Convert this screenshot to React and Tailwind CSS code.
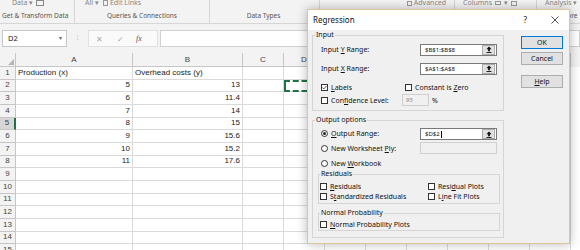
import React from 'react'

const widths = [117, 110, 41, 41, 41, 41, 41, 41, 41, 41]
const letters = ['A', 'B', 'C', 'D', 'E', 'F', 'G', 'H', 'I', 'J']
const data = [
  ['Production (x)', 'Overhead costs (y)'],
  ['5', '13'],
  ['6', '11.4'],
  ['7', '14'],
  ['8', '15'],
  ['9', '15.6'],
  ['10', '15.2'],
  ['11', '17.6'],
]

const ui = "font-['Noto_Sans','Open_Sans',sans-serif]"

function Check({ checked }) {
  return (
    <span className="w-[7px] h-[7px] border border-[#333] bg-white flex items-center justify-center shrink-0">
      {checked && (
        <svg width="6" height="5" viewBox="0 0 6 5">
          <path d="M0.4 2.4 L2.2 4.2 L5.6 0.5" fill="none" stroke="#222" strokeWidth="0.9" />
        </svg>
      )}
    </span>
  )
}

function Radio({ on }) {
  return (
    <span className="w-[7px] h-[7px] rounded-full border border-[#333] bg-white flex items-center justify-center shrink-0">
      {on && <span className="w-[3px] h-[3px] rounded-full bg-[#222]" />}
    </span>
  )
}

function RefBox({ value, disabled }) {
  return (
    <div className="w-[77px] h-[12px] bg-white border border-[#7a7a7a] flex items-center">
      <span className="flex-1 pl-[4px] text-[6px] leading-none text-[#111]">
        {value}
        {value === '$D$2' && <span className="inline-block w-px h-[7px] bg-black align-middle ml-px" />}
      </span>
      {!disabled && (
        <span className="w-[13px] h-[10px] mr-px border border-[#adadad] bg-[#e1e1e1] flex items-center justify-center">
          <svg width="6" height="7" viewBox="0 0 6 7">
            <path d="M3 0.5 L5.6 3.3 L3.9 3.3 L3.9 5.3 L2.1 5.3 L2.1 3.3 L0.4 3.3 Z" fill="#111" />
            <rect x="0.5" y="6" width="5" height="0.9" fill="#111" />
          </svg>
        </span>
      )}
    </div>
  )
}

function Btn({ children, primary }) {
  return (
    <div
      className={
        'w-[42px] h-[13px] flex items-center justify-center text-[7px] leading-none text-[#111] bg-[#e1e1e1] border ' +
        (primary ? 'border-[#0078d7]' : 'border-[#adadad]')
      }
    >
      {children}
    </div>
  )
}

function Sheet() {
  return (
    <div className="font-['Liberation_Sans',Arial,sans-serif] text-[8px] text-[#222]">
      <div className="flex h-[14px] bg-[#f3f3f3]">
        <div className="w-[16px] shrink-0 border-r border-b border-[#c6c6c6] flex items-end justify-end p-[1px]">
          <svg width="6" height="6" viewBox="0 0 6 6">
            <path d="M6 0 L6 6 L0 6 Z" fill="#b5b5b5" />
          </svg>
        </div>
        {widths.map((w, i) => (
          <div
            key={i}
            style={{ width: w }}
            className="shrink-0 border-r border-b border-[#c6c6c6] flex items-center justify-center text-[#444]"
          >
            {letters[i]}
          </div>
        ))}
      </div>
      {Array.from({ length: 15 }).map((_, r) => (
        <div key={r} className="flex h-[12.67px]">
          <div
            className={
              'w-[16px] shrink-0 border-b flex items-center justify-center text-[#444] ' +
              (r === 4
                ? 'bg-[#d6d6d6] border-r-2 border-r-[#217346] border-b-[#c6c6c6]'
                : 'bg-[#f3f3f3] border-r border-[#c6c6c6]')
            }
          >
            {r + 1}
          </div>
          {widths.map((w, c) => {
            const val = data[r] ? data[r][c] : undefined
            const right = r > 0
            return (
              <div
                key={c}
                style={{ width: w }}
                className={
                  'shrink-0 border-r border-b border-[#dadada] flex items-center overflow-visible whitespace-nowrap px-[2px] ' +
                  (right ? 'justify-end' : 'justify-start') +
                  (r === 1 && c === 3 ? ' outline-2 outline-dashed outline-[#217346] -outline-offset-2' : '')
                }
              >
                {val}
              </div>
            )
          })}
        </div>
      ))}
    </div>
  )
}

function Dialog() {
  return (
    <div
      className={
        'absolute left-[307px] top-[9px] w-[263px] h-[235px] border border-[#dcc59a] bg-[#f0f0f0] shadow-[0_0_10px_rgba(0,0,0,0.28)] flex flex-col text-[#111] ' +
        ui
      }
    >
      <div className="h-[20px] bg-white flex items-center shrink-0">
        <span className="pl-[5px] text-[8px] leading-none">Regression</span>
        <span className="ml-auto text-[8px] leading-none mr-[24px]">?</span>
        <svg className="mr-[10px]" width="8" height="8" viewBox="0 0 8 8">
          <path d="M0.5 0.5 L7.5 7.5 M7.5 0.5 L0.5 7.5" stroke="#222" strokeWidth="0.8" />
        </svg>
      </div>
      <div className="flex pl-[4px] text-[7px] leading-none">
        <div className="w-[192px] flex flex-col">
          <fieldset className="border border-[#d5d5d5] h-[81px]">
            <legend className="ml-[2px] px-[1px] h-[10px] leading-[10px]">Input</legend>
            <div className="flex flex-col pl-[8px]">
              <div className="flex items-center mt-[3px] h-[13px]">
                <span className="w-[99px]">
                  Input <u>Y</u> Range:
                </span>
                <RefBox value="$B$1:$B$8" />
              </div>
              <div className="flex items-center mt-[6px] h-[13px]">
                <span className="w-[99px]">
                  Input <u>X</u> Range:
                </span>
                <RefBox value="$A$1:$A$8" />
              </div>
              <div className="flex items-center mt-[7px] h-[10px]">
                <div className="w-[84px] flex items-center gap-[3px]">
                  <Check checked />
                  <span>
                    <u>L</u>abels
                  </span>
                </div>
                <div className="flex items-center gap-[3px]">
                  <Check />
                  <span>
                    Constant is <u>Z</u>ero
                  </span>
                </div>
              </div>
              <div className="flex items-center mt-[2px] h-[12px]">
                <div className="w-[81px] flex items-center gap-[3px]">
                  <Check />
                  <span>
                    Con<u>f</u>idence Level:
                  </span>
                </div>
                <div className="w-[27px] h-[12px] border border-[#cfcfcf] bg-[#f0f0f0] flex items-center pl-[3px] text-[#8a8a8a] text-[6px]">
                  95
                </div>
                <span className="ml-[3px]">%</span>
              </div>
            </div>
          </fieldset>
          <fieldset className="border border-[#d5d5d5] mt-[4px] h-[123px]">
            <legend className="ml-[2px] px-[1px] h-[10px] leading-[10px]">Output options</legend>
            <div className="flex flex-col pl-[8px]">
              <div className="flex items-start mt-[3px] h-[12px]">
                <div className="w-[99px] flex items-center gap-[3px] pt-[2px]">
                  <Radio on />
                  <span>
                    <u>O</u>utput Range:
                  </span>
                </div>
                <RefBox value="$D$2" />
              </div>
              <div className="flex items-center mt-[2px] h-[12px]">
                <div className="w-[99px] flex items-center gap-[3px]">
                  <Radio />
                  <span>
                    New Worksheet <u>P</u>ly:
                  </span>
                </div>
                <div className="w-[77px] h-[12px] bg-[#f0f0f0] border border-[#cfcfcf]" />
              </div>
              <div className="flex items-center mt-[4px] h-[10px] gap-[3px]">
                <Radio />
                <span>
                  New <u>W</u>orkbook
                </span>
              </div>
            </div>
            <fieldset className="border border-[#d5d5d5] ml-[5px] w-[182px] mt-px h-[35px]">
              <legend className="ml-[1px] px-[1px] h-[10px] leading-[10px]">Residuals</legend>
              <div className="flex mt-[2px] pl-px">
                <div className="w-[108px] flex flex-col">
                  <div className="flex items-center h-[10px] gap-[3px]">
                    <Check />
                    <span>
                      <u>R</u>esiduals
                    </span>
                  </div>
                  <div className="flex items-center h-[10px] gap-[3px]">
                    <Check />
                    <span>
                      S<u>t</u>andardized Residuals
                    </span>
                  </div>
                </div>
                <div className="flex flex-col">
                  <div className="flex items-center h-[10px] gap-[3px]">
                    <Check />
                    <span>
                      Resi<u>d</u>ual Plots
                    </span>
                  </div>
                  <div className="flex items-center h-[10px] gap-[3px]">
                    <Check />
                    <span>
                      L<u>i</u>ne Fit Plots
                    </span>
                  </div>
                </div>
              </div>
            </fieldset>
            <fieldset className="border border-[#d5d5d5] ml-[5px] w-[182px] mt-[4px] h-[23px]">
              <legend className="ml-[1px] px-[1px] h-[10px] leading-[10px]">Normal Probability</legend>
              <div className="flex items-center h-[10px] gap-[3px] mt-px pl-px">
                <Check />
                <span>
                  <u>N</u>ormal Probability Plots
                </span>
              </div>
            </fieldset>
          </fieldset>
        </div>
        <div className="ml-[17px] flex flex-col pt-[6px]">
          <Btn primary>OK</Btn>
          <div className="mt-[3px]">
            <Btn>Cancel</Btn>
          </div>
          <div className="mt-[10px]">
            <Btn>
              <span>
                <u>H</u>elp
              </span>
            </Btn>
          </div>
        </div>
      </div>
    </div>
  )
}

function Ribbon() {
  return (
    <div className={'h-[24px] bg-[#f3f3f3] border-b border-[#d6d6d6] flex text-[#555] overflow-hidden ' + ui}>
      <div className="w-[75px] shrink-0 border-r border-[#d6d6d6] flex flex-col">
        <div className="h-[12px] -mt-[3px] flex items-center pl-[12px] gap-[3px] text-[7px] text-[#888]">
          <span>Data ▾</span>
          <span className="w-[8px] h-[6px] border border-[#888]" />
        </div>
        <div className="text-[6.5px] pl-[2px] mt-[2px]">Get &amp; Transform Data</div>
      </div>
      <div className="w-[135px] shrink-0 border-r border-[#d6d6d6] flex flex-col">
        <div className="h-[12px] -mt-[3px] flex items-center pl-[10px] gap-[4px] text-[7px] text-[#888]">
          <span>All ▾</span>
          <span className="flex items-center gap-[2px]">
            <span className="w-[5px] h-[6px] border border-[#999]" />
            Edit Links
          </span>
        </div>
        <div className="text-[6.5px] text-center mt-[2px]">Queries &amp; Connections</div>
      </div>
      <div className="w-[110px] shrink-0 border-r border-[#d6d6d6] flex flex-col">
        <div className="h-[12px]" />
        <div className="text-[6.5px] text-center pr-[2px] -mt-px">Data Types</div>
      </div>
      <div className="w-[135px] shrink-0 border-r border-[#d6d6d6] flex flex-col">
        <div className="h-[12px] -mt-[3px] flex items-center justify-end pr-[8px] gap-[2px] text-[7px] text-[#888]">
          <span className="w-[5px] h-[5px] border border-[#999]" />
          <span>Advanced</span>
        </div>
      </div>
      <div className="w-[82px] shrink-0 border-r border-[#d6d6d6] flex flex-col">
        <div className="h-[12px] -mt-[3px] flex items-center pl-[8px] gap-[3px] text-[7px] text-[#888]">
          <span>Columns</span>
          <span className="w-[6px] h-[4px] border border-[#999]" />
          <span>▾</span>
          <span className="w-[6px] h-[5px] border border-[#999]" />
        </div>
      </div>
      <div className="flex-1 flex flex-col">
        <div className="h-[12px] -mt-[3px] flex items-center pl-[8px] text-[7px] text-[#888]">Analysis ▾</div>
        <div className="text-[6.5px] pl-[27px] mt-[2px]">Fore</div>
      </div>
    </div>
  )
}

function FormulaBar() {
  return (
    <div className={'h-[29px] bg-[#f3f3f3] flex items-start pt-[6px] ' + ui}>
      <div className="ml-[2px] w-[65px] h-[17px] bg-white border border-[#c6c6c6] flex items-center pl-[5px] pr-[4px] text-[7.5px] text-[#222]">
        <span>D2</span>
        <span className="ml-auto text-[6px] text-[#666]">▾</span>
      </div>
      <div className="w-[21px] h-[17px] flex items-center justify-center text-[#bbb] text-[7px]">⁝</div>
      <div className="w-[70px] h-[17px] bg-[#fafafa] border border-[#e0e0e0] flex items-center text-[#aaa]">
        <span className="ml-[7px] text-[8px]">✕</span>
        <span className="ml-[14px] text-[8px]">✓</span>
        <span className="ml-[12px] text-[8px] italic font-['Liberation_Serif',serif] text-[#555]">fx</span>
      </div>
      <div className="ml-[2px] flex-1 h-[17px] bg-white border border-[#d0d0d0]" />
    </div>
  )
}

export default function App() {
  return (
    <div className="w-[580px] h-[250px] relative overflow-hidden bg-white">
      <Ribbon />
      <FormulaBar />
      <Sheet />
      <Dialog />
    </div>
  )
}
